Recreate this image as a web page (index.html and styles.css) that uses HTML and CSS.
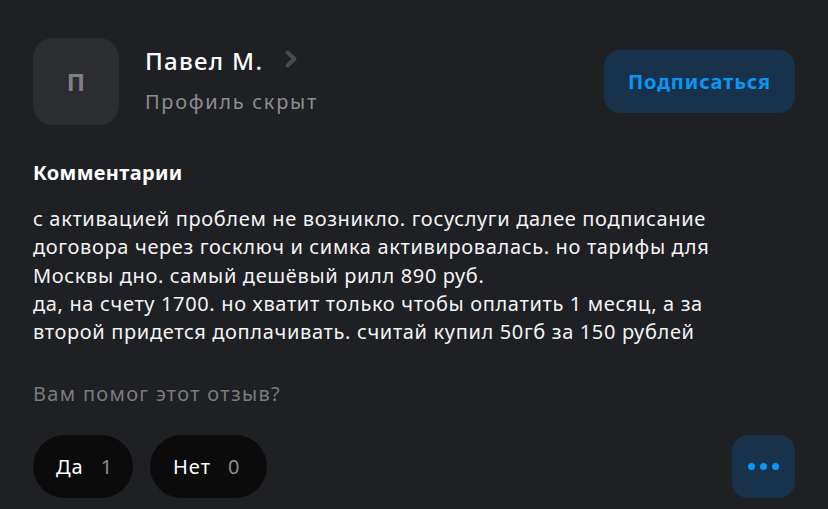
FILE: index.html
```html
<!DOCTYPE html>
<html lang="ru">
<head>
<meta charset="utf-8">
<link rel="stylesheet" href="styles.css">
</head>
<body>
<div class="card">
  <div class="header">
    <div class="user">
      <div class="avatar">П</div>
      <div class="info">
        <div class="name">Павел М.
          <svg class="chev" width="16" height="20" viewBox="0 0 16 20"><path d="M4.5 3.5 L11.5 10 L4.5 16.5" fill="none" stroke="#4a4b50" stroke-width="4" stroke-linecap="round" stroke-linejoin="round"/></svg>
        </div>
        <div class="hidden">Профиль скрыт</div>
      </div>
    </div>
    <button class="subscribe">Подписаться</button>
  </div>
  <div class="section-title">Комментарии</div>
  <div class="comment">с активацией проблем не возникло. госуслуги далее подписание<br>договора через госключ и симка активировалась. но тарифы для<br>Москвы дно. самый дешёвый рилл 890 руб.<br>да, на счету 1700. но хватит только чтобы оплатить 1 месяц, а за<br>второй придется доплачивать. считай купил 50гб за 150 рублей</div>
  <div class="question">Вам помог этот отзыв?</div>
  <div class="actions">
    <div class="votes">
      <button class="vote vote-yes">Да <span class="count">1</span></button>
      <button class="vote vote-no">Нет <span class="count">0</span></button>
    </div>
    <button class="more"><span></span><span></span><span></span></button>
  </div>
</div>
</body>
</html>
```
FILE: styles.css
```css
* { box-sizing: border-box; }
html, body { margin: 0; padding: 0; background: #1e2024; }
body { font-family: "Noto Sans", sans-serif; color: #f2f2f2; }
.card { padding: 38px 33px 0 33px; width: 828px; height: 509px; }
.header { display: flex; justify-content: space-between; align-items: flex-start; }
.user { display: flex; align-items: center; gap: 26px; }
.avatar { width: 86px; height: 87px; border-radius: 20px; background: #2c2d31; color: #808084; font-size: 24px; font-weight: 700; display: flex; align-items: center; justify-content: center; }
.info { display: flex; flex-direction: column; gap: 11px; margin-top: -3px; }
.name { font-size: 24px; font-weight: 500; color: #ffffff; display: flex; align-items: center; gap: 20px; line-height: 32px; letter-spacing: 1.3px; }
.chev { margin-top: -3px; }
.hidden { font-size: 20px; color: #8d8d92; line-height: 28px; letter-spacing: 1.7px; }
.subscribe { margin-top: 12px; width: 191px; height: 63px; border: 0; border-radius: 16px; background: #17324a; color: #0a96f5; font-family: inherit; font-size: 20px; font-weight: 700; letter-spacing: 0.9px; }
.section-title { margin-top: 34px; font-size: 20px; font-weight: 700; color: #fff; letter-spacing: 0.35px; }
.comment { margin-top: 19px; font-size: 20px; line-height: 28.25px; color: #f4f4f4; letter-spacing: 0.65px; }
.question { margin-top: 34px; font-size: 20px; color: #7a7b80; letter-spacing: 1.3px; }
.actions { margin-top: 28px; display: flex; justify-content: space-between; align-items: center; }
.votes { display: flex; gap: 17px; }
.vote { height: 63px; border: 0; border-radius: 32px; background: #0b0b0c; color: #fff; font-family: inherit; font-size: 20px; padding: 0 23px; display: flex; align-items: center; gap: 17px; letter-spacing: 1px; }
.vote-yes { width: 100px; }
.vote-no { width: 117px; }
.vote .count { color: #8d8d92; }
.more { width: 63px; height: 63px; border: 0; border-radius: 16px; background: #17324a; display: flex; align-items: center; justify-content: center; gap: 5px; }
.more span { width: 7px; height: 7px; border-radius: 50%; background: #0a96f5; }
```
